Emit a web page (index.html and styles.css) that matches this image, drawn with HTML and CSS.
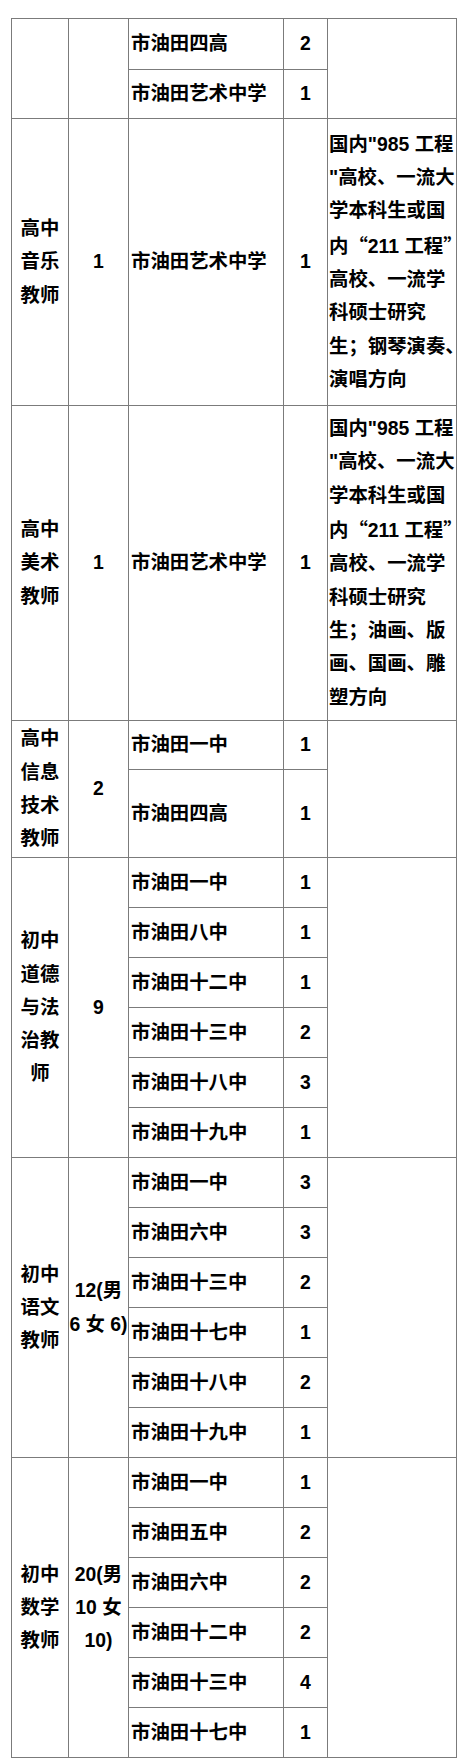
FILE: index.html
```html
<!DOCTYPE html>
<html lang="zh-CN">
<head>
<meta charset="utf-8">
<title>招聘岗位表</title>
<link rel="stylesheet" href="styles.css">
</head>
<body>
<div class="page">
<table class="jobs">
  <colgroup>
    <col class="c-post"><col class="c-num"><col class="c-school"><col class="c-count"><col class="c-req">
  </colgroup>
  <tbody>
    <tr class="h51">
      <td class="post" rowspan="2"></td>
      <td class="num" rowspan="2"></td>
      <td class="school">市油田四高</td>
      <td class="count">2</td>
      <td class="req" rowspan="2"></td>
    </tr>
    <tr class="h49">
      <td class="school">市油田艺术中学</td>
      <td class="count">1</td>
    </tr>

    <tr class="h287">
      <td class="post">高中<br>音乐<br>教师</td>
      <td class="num">1</td>
      <td class="school">市油田艺术中学</td>
      <td class="count">1</td>
      <td class="req">国内"985 工程<br>"高校、一流大<br>学本科生或国<br>内<span class="q">“</span>211 工程<span class="q">”</span><br>高校、一流学<br>科硕士研究<br>生；钢琴演奏、<br>演唱方向</td>
    </tr>

    <tr class="h315">
      <td class="post">高中<br>美术<br>教师</td>
      <td class="num">1</td>
      <td class="school">市油田艺术中学</td>
      <td class="count">1</td>
      <td class="req">国内"985 工程<br>"高校、一流大<br>学本科生或国<br>内<span class="q">“</span>211 工程<span class="q">”</span><br>高校、一流学<br>科硕士研究<br>生；油画、版<br>画、国画、雕<br>塑方向</td>
    </tr>

    <tr class="h49">
      <td class="post" rowspan="2">高中<br>信息<br>技术<br>教师</td>
      <td class="num" rowspan="2">2</td>
      <td class="school">市油田一中</td>
      <td class="count">1</td>
      <td class="req" rowspan="2"></td>
    </tr>
    <tr class="h88">
      <td class="school">市油田四高</td>
      <td class="count">1</td>
    </tr>

    <tr class="h50">
      <td class="post" rowspan="6">初中<br>道德<br>与法<br>治教<br>师</td>
      <td class="num" rowspan="6">9</td>
      <td class="school">市油田一中</td>
      <td class="count">1</td>
      <td class="req" rowspan="6"></td>
    </tr>
    <tr class="h50"><td class="school">市油田八中</td><td class="count">1</td></tr>
    <tr class="h50"><td class="school">市油田十二中</td><td class="count">1</td></tr>
    <tr class="h50"><td class="school">市油田十三中</td><td class="count">2</td></tr>
    <tr class="h50"><td class="school">市油田十八中</td><td class="count">3</td></tr>
    <tr class="h50"><td class="school">市油田十九中</td><td class="count">1</td></tr>

    <tr class="h50">
      <td class="post" rowspan="6">初中<br>语文<br>教师</td>
      <td class="num" rowspan="6">12(男<br>6 女 6)</td>
      <td class="school">市油田一中</td>
      <td class="count">3</td>
      <td class="req" rowspan="6"></td>
    </tr>
    <tr class="h50"><td class="school">市油田六中</td><td class="count">3</td></tr>
    <tr class="h50"><td class="school">市油田十三中</td><td class="count">2</td></tr>
    <tr class="h50"><td class="school">市油田十七中</td><td class="count">1</td></tr>
    <tr class="h50"><td class="school">市油田十八中</td><td class="count">2</td></tr>
    <tr class="h50"><td class="school">市油田十九中</td><td class="count">1</td></tr>

    <tr class="h50">
      <td class="post" rowspan="6">初中<br>数学<br>教师</td>
      <td class="num" rowspan="6">20(男<br>10 女<br>10)</td>
      <td class="school">市油田一中</td>
      <td class="count">1</td>
      <td class="req" rowspan="6"></td>
    </tr>
    <tr class="h50"><td class="school">市油田五中</td><td class="count">2</td></tr>
    <tr class="h50"><td class="school">市油田六中</td><td class="count">2</td></tr>
    <tr class="h50"><td class="school">市油田十二中</td><td class="count">2</td></tr>
    <tr class="h50"><td class="school">市油田十三中</td><td class="count">4</td></tr>
    <tr class="h50"><td class="school">市油田十七中</td><td class="count">1</td></tr>
  </tbody>
</table>
</div>
</body>
</html>
```
FILE: styles.css
```css
html, body {
  margin: 0;
  padding: 0;
  background: #ffffff;
}

.page {
  padding: 18px 0 0 11px;
}

.jobs {
  border-collapse: collapse;
  table-layout: fixed;
  width: 445px;
  font-family: "Liberation Sans", "Noto Sans CJK SC", sans-serif;
  font-size: 19.4px;
  font-weight: 700;
  line-height: 33.3px;
  color: #000000;
}

.c-post { width: 57px; }
.c-num { width: 60px; }
.c-school { width: 155px; }
.c-count { width: 44px; }
.c-req { width: 129px; }

.jobs td {
  border: 1px solid #7b7b7b;
  padding: 0;
  vertical-align: middle;
  white-space: nowrap;
  overflow: visible;
}

.jobs td.post,
.jobs td.num,
.jobs td.count {
  text-align: center;
}

.jobs td.school {
  text-align: left;
  padding-left: 2px;
  border-left: 1px solid #000000;
}

.jobs td.req {
  text-align: left;
  padding-left: 1px;
}

.q {
  font-family: "Noto Sans CJK SC", sans-serif;
}

.h49 { height: 49px; }
.h50 { height: 50px; }
.h51 { height: 51px; }
.h88 { height: 88px; }
.h287 { height: 287px; }
.h315 { height: 315px; }
```
